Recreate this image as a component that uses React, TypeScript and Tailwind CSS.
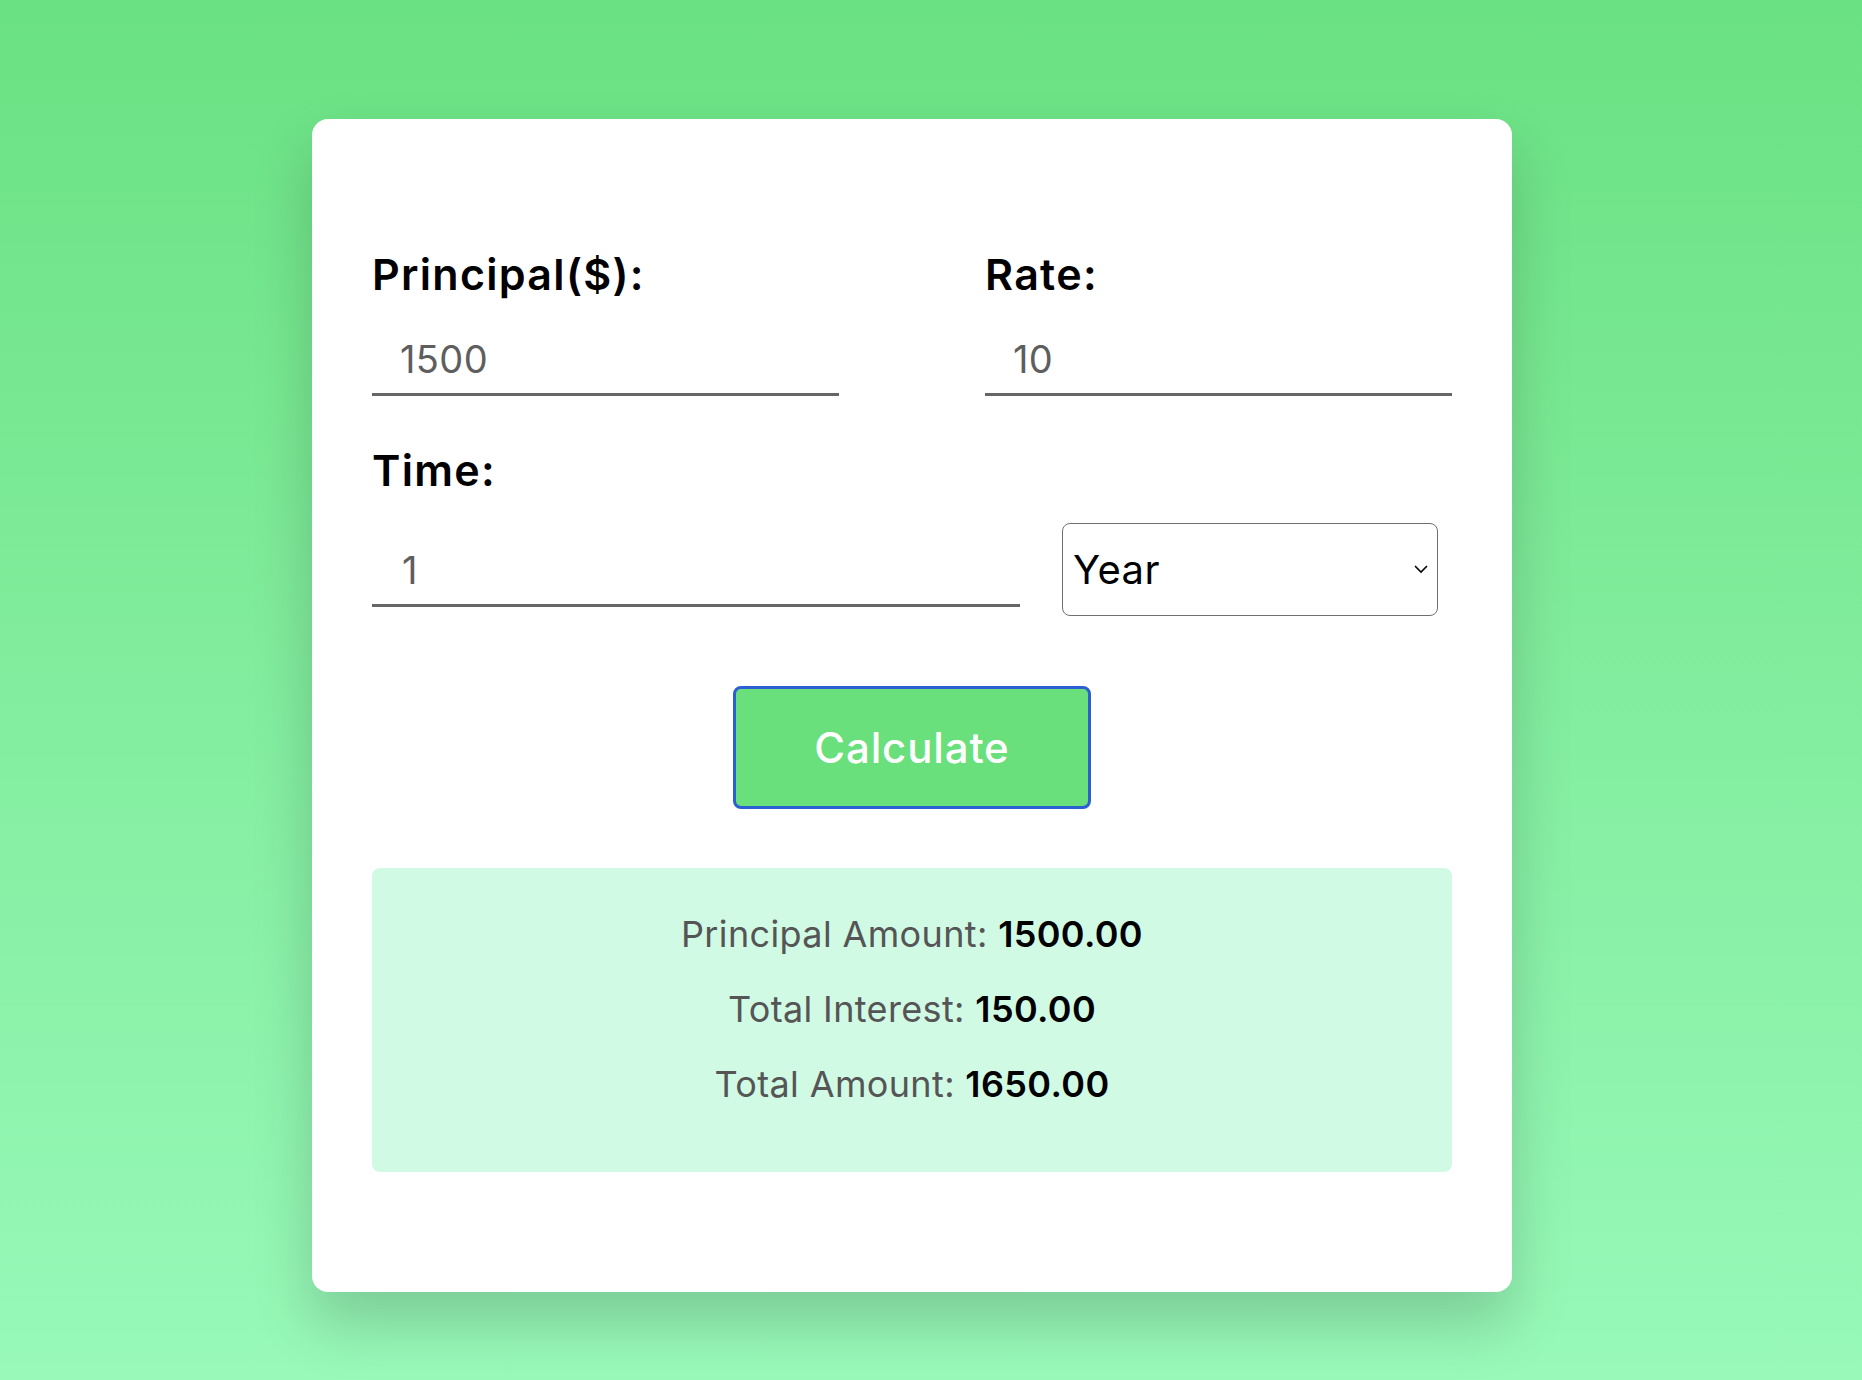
import React, { useState } from 'react';

const font = "font-['Inter','Liberation_Sans',sans-serif]";

const Field: React.FC<{ label: string; value: string; onChange: (v: string) => void }> = ({ label, value, onChange }) => (
  <div className="w-[467px]">
    <label className="block h-[42px] text-[43px] leading-none font-semibold text-black tracking-[0.03em]">{label}</label>
    <input
      type="text"
      value={value}
      onChange={(e) => onChange(e.target.value)}
      className="mt-[45px] block h-[56px] w-full border-0 border-b-[3px] border-[#666] pb-[15px] pl-[28px] text-[38px] leading-none text-[#5e5e5e] tracking-[0.01em] outline-none"
    />
  </div>
);

const App: React.FC = () => {
  const [principal, setPrincipal] = useState('1500');
  const [rate, setRate] = useState('10');
  const [time, setTime] = useState('1');
  const [unit, setUnit] = useState('Year');

  const p = parseFloat(principal) || 0;
  const r = parseFloat(rate) || 0;
  const t = (parseFloat(time) || 0) / (unit === 'Month' ? 12 : 1);
  const interest = (p * r * t) / 100;

  return (
    <div className={`min-h-screen bg-linear-to-b from-[#6ae182] to-[#98f9b9] pt-[119px] pb-[88px] ${font}`}>
      <div className="ml-[312px] w-[1200px] rounded-2xl bg-white px-[60px] pt-[134px] pb-[120px] shadow-[0_30px_60px_rgba(0,0,0,0.18)]">
        <div className="flex justify-between">
          <Field label="Principal($):" value={principal} onChange={setPrincipal} />
          <Field label="Rate:" value={rate} onChange={setRate} />
        </div>

        <label className="mt-[53px] block h-[42px] text-[43px] leading-none font-semibold text-black tracking-[0.03em]">Time:</label>
        <div className="mt-[32px] flex items-start">
          <input
            type="text"
            value={time}
            onChange={(e) => setTime(e.target.value)}
            className="mt-[28px] block h-[56px] w-[648px] border-0 border-b-[3px] border-[#666] pb-[15px] pl-[30px] text-[38px] leading-none text-[#5e5e5e] outline-none"
          />
          <div className="relative ml-[42px] w-[376px]">
            <select
              value={unit}
              onChange={(e) => setUnit(e.target.value)}
              className="block h-[93px] w-full appearance-none rounded-[8px] border-[1.5px] border-[#6f6f6f] bg-white pl-[10px] text-[40px] text-black tracking-[0.01em] outline-none"
            >
              <option>Year</option>
              <option>Month</option>
            </select>
            <svg className="pointer-events-none absolute right-[9px] top-[41px] h-[10px] w-[16px]" viewBox="0 0 16 10" fill="none">
              <path d="M2 2l6 6 6-6" stroke="#000" strokeWidth="1.6" />
            </svg>
          </div>
        </div>

        <button className="mx-auto mt-[70px] block h-[123px] w-[358px] rounded-[8px] border-[3px] border-[#2c5fd2] bg-[#69e07c] text-[42px] font-medium text-white tracking-[0.02em]">
          Calculate
        </button>

        <div className="mt-[59px] h-[304px] rounded-[8px] bg-[#d1fae5] pt-[29px] text-center text-[36px] leading-[75px] text-[#555] tracking-[0.01em]">
          <p>
            Principal Amount: <span className="font-semibold text-black">{p.toFixed(2)}</span>
          </p>
          <p>
            Total Interest: <span className="font-semibold text-black">{interest.toFixed(2)}</span>
          </p>
          <p>
            Total Amount: <span className="font-semibold text-black">{(p + interest).toFixed(2)}</span>
          </p>
        </div>
      </div>
    </div>
  );
};

export default App;
